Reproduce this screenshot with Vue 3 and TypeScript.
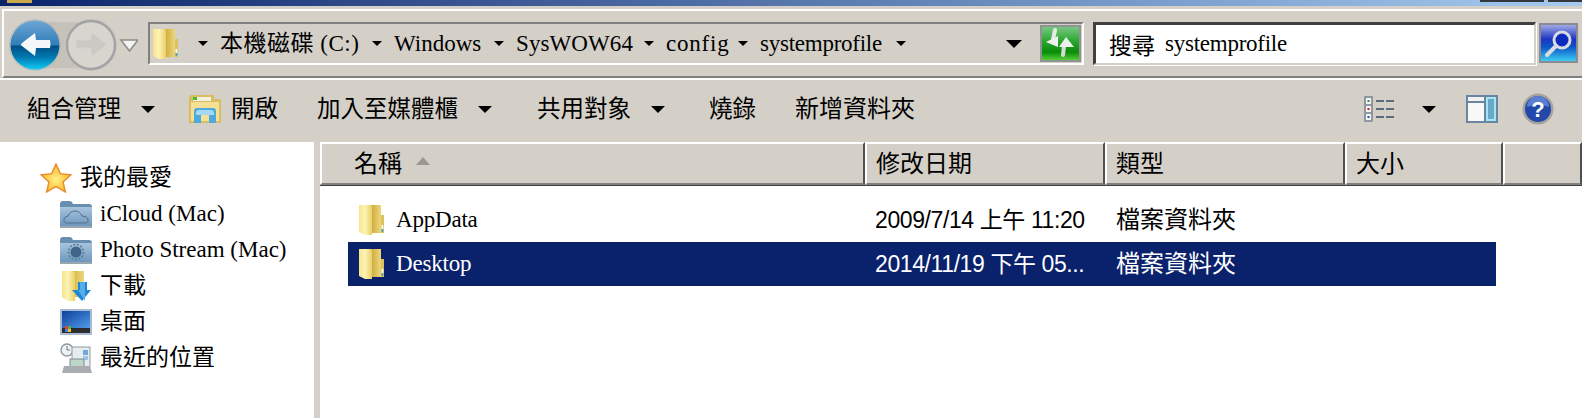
<script setup lang="ts">
interface Crumb { label: string; width: number; spacing: number }
interface FileRow { name: string; date: string; type: string; selected: boolean }

const crumbs: Crumb[] = [
  { label: '本機磁碟 (C:)', width: 174, spacing: 0.5 },
  { label: 'Windows', width: 122, spacing: 0 },
  { label: 'SysWOW64', width: 150, spacing: 0.1 },
  { label: 'config', width: 94, spacing: 0.8 },
  { label: 'systemprofile', width: 158, spacing: -0.25 },
]

const columns: string[] = ['名稱', '修改日期', '類型', '大小', '']

const files: FileRow[] = [
  { name: 'AppData', date: '2009/7/14 上午 11:20', type: '檔案資料夾', selected: false },
  { name: 'Desktop', date: '2014/11/19 下午 05...', type: '檔案資料夾', selected: true },
]
</script>

<template>
  <div class="window">
    <svg class="defs" aria-hidden="true">
      <defs>
        <linearGradient id="doorG" x1="0" y1="0" x2="1" y2="0">
          <stop offset="0" stop-color="#f5e48e" />
          <stop offset="0.45" stop-color="#fdf3b4" />
          <stop offset="1" stop-color="#e8cf68" />
        </linearGradient>
        <linearGradient id="backG" x1="0" y1="0" x2="1" y2="0">
          <stop offset="0" stop-color="#cfa93a" />
          <stop offset="1" stop-color="#ecd77c" />
        </linearGradient>
        <linearGradient id="blueBtn" x1="0" y1="0" x2="0" y2="1">
          <stop offset="0" stop-color="#6fa6d4" />
          <stop offset="0.5" stop-color="#2f7db9" />
          <stop offset="0.52" stop-color="#004f82" />
          <stop offset="0.75" stop-color="#0079b0" />
          <stop offset="1" stop-color="#12ccf5" />
        </linearGradient>
        <linearGradient id="greenBtn" x1="0" y1="0" x2="0" y2="1">
          <stop offset="0" stop-color="#7ec98a" />
          <stop offset="0.45" stop-color="#27a52b" />
          <stop offset="0.75" stop-color="#0a8c0a" />
          <stop offset="1" stop-color="#5ed83c" />
        </linearGradient>
        <linearGradient id="searchBtn" x1="0" y1="0" x2="0" y2="1">
          <stop offset="0" stop-color="#a9b0e6" />
          <stop offset="0.4" stop-color="#1c35c4" />
          <stop offset="0.6" stop-color="#0d55c8" />
          <stop offset="1" stop-color="#3fd4f5" />
        </linearGradient>
        <linearGradient id="slateG" x1="0" y1="0" x2="0" y2="1">
          <stop offset="0" stop-color="#a9c4dc" />
          <stop offset="1" stop-color="#6d97bd" />
        </linearGradient>
        <radialGradient id="starG" cx="0.5" cy="0.55" r="0.55">
          <stop offset="0" stop-color="#fff08a" />
          <stop offset="0.7" stop-color="#fdc640" />
          <stop offset="1" stop-color="#f59a22" />
        </radialGradient>
        <linearGradient id="deskG" x1="0" y1="0" x2="1" y2="1">
          <stop offset="0" stop-color="#0f3f9c" />
          <stop offset="1" stop-color="#4f9be6" />
        </linearGradient>
        <symbol id="folder" viewBox="0 0 26 32">
          <path d="M13 1h10v28H13z" fill="url(#backG)" />
          <path d="M23 11h3v18h-3z" fill="#dcc25e" />
          <rect x="23.6" y="21" width="1.6" height="4" fill="#fff" />
          <rect x="23.6" y="25" width="1.6" height="3" fill="#3ba3d8" />
          <path d="M1 1h12l1 2v28H7l-6-3z" fill="url(#doorG)" />
        </symbol>
        <symbol id="slateFolder" viewBox="0 0 32 29">
          <path d="M0 4q0-3 3-3h7q2 0 3 3h16q3 0 3 3v20H0z" fill="#688fb2" />
          <rect x="0" y="7" width="32" height="19" fill="url(#slateG)" />
          <rect x="0" y="26" width="32" height="2" fill="#9aa6b0" />
        </symbol>
      </defs>
    </svg>

    <div class="titlebar">
      <span class="title-icon"></span>
      <span class="title-btn title-btn-min"></span>
      <span class="title-btn title-btn-close"></span>
    </div>

    <div class="addressbar">
      <svg class="nav-buttons" width="130" height="52" viewBox="0 0 130 52">
        <rect x="24" y="3" width="60" height="46" fill="#bdb9b0" opacity="0.6" />
        <circle cx="27" cy="26" r="26" fill="#b4b4b4" opacity="0.55" />
        <circle cx="27" cy="26" r="24.5" fill="url(#blueBtn)" />
        <path d="M14 24 27 14l1 7h14q1 4 0 8H28l-1 8-13-10q-2-1 0-3z" fill="#f4f8fb" />
        <circle cx="83" cy="26" r="26" fill="#c8c6c0" />
        <circle cx="83" cy="26" r="24" fill="#d8d5ce" stroke="#a3a2a4" stroke-width="2.4" />
        <path d="M97 24 84 14l-1 7H69q-1 4 0 8h14l1 8 13-10q2-1 0-3z" fill="#cbc9c3" stroke="#d2d0ca" stroke-width="1" />
        <path d="M113 21h17l-8.5 11z" fill="#f4f3ef" stroke="#8d8d90" stroke-width="1.6" />
      </svg>

      <div class="address">
        <svg class="address-folder" width="26" height="32"><use href="#folder" /></svg>
        <div
          class="crumb"
          v-for="crumb in crumbs"
          :key="crumb.label"
          :style="{ width: crumb.width + 'px' }"
        >
          <span class="caret-sm"></span>
          <span class="crumb-text" :style="{ letterSpacing: crumb.spacing + 'px' }">{{ crumb.label }}</span>
        </div>
        <span class="caret-sm"></span>
        <span class="caret-lg caret-history"></span>
        <svg class="refresh" width="41" height="37" viewBox="0 0 41 37">
          <rect x="1" y="1" width="39" height="35" fill="url(#greenBtn)" stroke="#8e9491" stroke-width="2" />
          <path d="M15 5 13 15" stroke="#e4ebe4" stroke-width="4" stroke-linecap="round" />
          <path d="M6 17l12-6v11z" fill="#eef2ee" />
          <path d="M24 21 23 30" stroke="#d4dcd4" stroke-width="4" stroke-linecap="round" />
          <path d="M26 12l8 10H19z" fill="#eef2ee" />
        </svg>
      </div>

      <div class="search">
        <span class="search-cjk">搜尋</span>
        <span class="search-text">systemprofile</span>
      </div>

      <svg class="search-btn" width="39" height="40" viewBox="0 0 39 40">
        <rect x="1" y="1" width="37" height="38" fill="url(#searchBtn)" stroke="#8a8b93" stroke-width="2" />
        <circle cx="23" cy="17" r="8" fill="#0a2bbd" stroke="#d8dbe2" stroke-width="3" />
        <path d="M17 23 8 32" stroke="#d8dbe2" stroke-width="4" stroke-linecap="round" />
      </svg>
    </div>

    <div class="commandbar">
      <button class="cmd first">組合管理<span class="caret-lg cmd-caret"></span></button>
      <button class="cmd open">
        <svg width="32" height="28" viewBox="0 0 32 28">
          <path d="M0 3q0-3 3-3h22v4h7v24H0z" fill="#d9bd62" />
          <rect x="4" y="2" width="18" height="4" fill="#f4f1df" />
          <rect x="4" y="2" width="4" height="3" fill="#3cc22c" />
          <rect x="2" y="7" width="28" height="19" fill="#f4e196" />
          <path d="M5 28V16q0-3 3-3h16q3 0 3 3v12h-7v-7q0-2-2-2h-4q-2 0-2 2v7z" fill="#4ea9dc" />
          <path d="M7 18q0-3 3-3h12q3 0 3 3v2H7z" fill="#a6d8f2" />
        </svg>
        <span>開啟</span>
      </button>
      <button class="cmd library">加入至媒體櫃<span class="caret-lg cmd-caret"></span></button>
      <button class="cmd share">共用對象<span class="caret-lg cmd-caret"></span></button>
      <button class="cmd burn">燒錄</button>
      <button class="cmd newfolder">新增資料夾</button>

      <div class="cmd-right">
        <svg width="30" height="26" viewBox="0 0 30 26">
          <rect x="0" y="0" width="9" height="26" rx="1" fill="#8f979f" />
          <rect x="2" y="2" width="5" height="6" fill="#f4f4f0" />
          <rect x="2" y="10" width="5" height="6" fill="#f4f4f0" />
          <rect x="2" y="18" width="5" height="6" fill="#f4f4f0" />
          <rect x="3.5" y="4" width="2" height="2" fill="#2f8f4f" />
          <rect x="3.5" y="12" width="2" height="2" fill="#d01818" />
          <rect x="3.5" y="20" width="2" height="2" fill="#2050c0" />
          <g fill="#5c6a7c">
            <rect x="12" y="4" width="8" height="2" /><rect x="22" y="4" width="8" height="2" />
            <rect x="12" y="12" width="8" height="2" /><rect x="22" y="12" width="8" height="2" />
            <rect x="12" y="20" width="8" height="2" /><rect x="22" y="20" width="8" height="2" />
          </g>
        </svg>
        <span class="caret-lg view-caret"></span>
        <svg class="pane-icon" width="32" height="28" viewBox="0 0 32 28">
          <rect x="0" y="0" width="32" height="28" fill="#6a84a2" />
          <rect x="2" y="2" width="16" height="4" fill="#f2f2ee" />
          <rect x="2" y="8" width="16" height="18" fill="#f8f8f6" />
          <rect x="20" y="2" width="10" height="24" fill="#a2e6f4" />
          <rect x="22" y="4" width="6" height="20" fill="#6aa8c8" />
        </svg>
        <svg class="help-icon" width="32" height="32" viewBox="0 0 32 32">
          <circle cx="16" cy="16" r="15.5" fill="#a5a39e" />
          <circle cx="16" cy="16" r="13" fill="#2248ac" />
          <path d="M5 14a11 11 0 0 1 22 0q-11-5-22 0z" fill="#5a7fd0" />
          <text x="16" y="24" text-anchor="middle" class="help-q">?</text>
        </svg>
      </div>
    </div>

    <div class="body">
      <nav class="sidebar">
        <div class="fav">
          <svg width="32" height="30" viewBox="0 0 32 30">
            <path d="M16 1l4.4 9.6L31 11.8l-8 7.2L25.4 29 16 23.6 6.6 29 9 19l-8-7.2 10.6-1.2z" fill="url(#starG)" stroke="#ea8a30" stroke-width="1.4" />
          </svg>
          <span>我的最愛</span>
        </div>
        <div class="nav-item">
          <svg width="32" height="29"><use href="#slateFolder" /></svg>
          <svg class="overlay-glyph" width="32" height="29" viewBox="0 0 32 29">
            <path d="M6 24q-3-1-2-4t4-3q2-5 7-5t7 5q5 0 6 3t-2 4z" fill="none" stroke="#52708c" stroke-width="1" />
          </svg>
          <span class="latin">iCloud (Mac)</span>
        </div>
        <div class="nav-item">
          <svg width="32" height="29"><use href="#slateFolder" /></svg>
          <svg class="overlay-glyph" width="32" height="29" viewBox="0 0 32 29">
            <circle cx="16" cy="17" r="5.5" fill="#3f6488" />
            <circle cx="16" cy="17" r="7.5" fill="none" stroke="#52799c" stroke-width="1.5" stroke-dasharray="2 1.6" />
          </svg>
          <span class="latin">Photo Stream (Mac)</span>
        </div>
        <div class="nav-item">
          <svg width="32" height="32" viewBox="0 0 32 32">
            <path d="M8 1h16v26H8z" fill="url(#backG)" />
            <path d="M2 1h11l2 2v28H8l-6-4z" fill="url(#doorG)" />
            <path d="M20 12h9v8h4l-9 11-10-11h6z" transform="translate(-2 0)" fill="#1f86d8" />
            <path d="M20 12h5v19l-7-11h2z" fill="#55aee8" />
          </svg>
          <span>下載</span>
        </div>
        <div class="nav-item">
          <svg width="32" height="26" viewBox="0 0 32 26">
            <rect x="0" y="0" width="32" height="26" fill="#a9bbd2" />
            <rect x="2" y="2" width="28" height="17" fill="url(#deskG)" />
            <rect x="2" y="19" width="28" height="5" fill="#2d2d2d" />
            <rect x="5" y="17" width="3" height="3" fill="#e3432f" />
            <rect x="8" y="17" width="3" height="3" fill="#4fb04a" />
            <rect x="5" y="20" width="3" height="3" fill="#3c80e0" />
            <rect x="8" y="20" width="3" height="3" fill="#f2c230" />
          </svg>
          <span>桌面</span>
        </div>
        <div class="nav-item">
          <svg width="32" height="30" viewBox="0 0 32 30">
            <circle cx="7" cy="7" r="6" fill="#eef1f3" stroke="#8d9aa4" stroke-width="1.4" />
            <path d="M7 3v4h3" fill="none" stroke="#6c7a86" stroke-width="1" />
            <rect x="12" y="4" width="18" height="20" fill="#e6ebee" stroke="#909aa2" />
            <rect x="23" y="7" width="5" height="5" fill="#6ea9dc" />
            <rect x="23" y="13" width="5" height="4" fill="#9cc5e8" />
            <rect x="10" y="16" width="14" height="8" fill="#bcd6c8" stroke="#7f8b90" />
            <path d="M4 23h26l2 7H2z" fill="#a9adb1" />
          </svg>
          <span>最近的位置</span>
        </div>
      </nav>

      <main class="files">
        <div class="file-head">
          <div class="head-cell" v-for="(col, i) in columns" :key="i">
            <span>{{ col }}</span>
            <svg v-if="i === 0" class="sort" width="14" height="8" viewBox="0 0 14 8">
              <path d="M7 0l7 8H0z" fill="#9a9894" />
            </svg>
          </div>
        </div>
        <div class="file-list">
          <div class="file-row" :class="{ selected: file.selected }" v-for="file in files" :key="file.name">
            <div class="cell-name">
              <svg width="26" height="32"><use href="#folder" /></svg>
              <span class="latin name">{{ file.name }}</span>
            </div>
            <div class="cell-date">{{ file.date }}</div>
            <div class="cell-type">{{ file.type }}</div>
          </div>
        </div>
      </main>
    </div>
  </div>
</template>

<style scoped>
.window {
  position: relative;
  width: 1582px;
  height: 418px;
  overflow: hidden;
  background: #d4d0c8;
  color: #000;
  font-family: "Liberation Serif", "Noto Sans CJK TC", serif;
  font-size: 23px;
}
.defs { position: absolute; width: 0; height: 0; }

.titlebar {
  position: relative;
  height: 6px;
  background: linear-gradient(to right, #0a246a, #a6caf0);
}
.title-icon {
  position: absolute;
  left: 7px;
  top: 0;
  width: 25px;
  height: 3px;
  background: #c9a94a;
}
.title-btn {
  position: absolute;
  top: 0;
  height: 2px;
  background: #33383f;
}
.title-btn-min { left: 1480px; width: 64px; }
.title-btn-close { left: 1548px; width: 34px; }

.addressbar {
  box-sizing: border-box;
  display: flex;
  align-items: flex-start;
  height: 69px;
  margin: 3px 0 0 2px;
  padding: 11px 0 0 4px;
  border-top: 2px solid #fff;
  border-left: 2px solid #fff;
  border-bottom: 2px solid #808080;
}
.nav-buttons { margin-top: -3px; flex: none; }
.address {
  box-sizing: border-box;
  display: flex;
  align-items: center;
  width: 936px;
  height: 43px;
  margin-left: 10px;
  padding-left: 2px;
  border-top: 2px solid #808080;
  border-left: 2px solid #808080;
  border-bottom: 2px solid #fff;
  border-right: 2px solid #fff;
}
.address-folder { flex: none; margin-right: 20px; }
.crumb { display: flex; align-items: center; flex: none; white-space: nowrap; }
.crumb-text { margin-left: 12px; line-height: 30px; }
.caret-sm {
  flex: none;
  width: 0;
  height: 0;
  border-left: 5px solid transparent;
  border-right: 5px solid transparent;
  border-top: 5px solid #000;
}
.caret-lg {
  display: inline-block;
  flex: none;
  width: 0;
  height: 0;
  border-left: 7px solid transparent;
  border-right: 7px solid transparent;
  border-top: 7px solid #000;
}
.caret-history { margin-left: auto; margin-right: 18px; border-left-width: 8px; border-right-width: 8px; border-top-width: 8px; }
.refresh { flex: none; margin-right: 1px; }

.search {
  box-sizing: border-box;
  display: flex;
  align-items: center;
  width: 443px;
  height: 43px;
  margin-left: 9px;
  padding-left: 13px;
  background: #fff;
  border-top: 3px solid #404040;
  border-left: 3px solid #404040;
  border-right: 2px solid #d4d0c8;
  border-bottom: 2px solid #d4d0c8;
  box-shadow: 1px 1px 0 #fff;
}
.search-text { margin-left: 10px; letter-spacing: -0.25px; }
.search-btn { flex: none; margin: 1px 0 0 3px; }

.commandbar {
  box-sizing: border-box;
  display: flex;
  align-items: center;
  height: 64px;
  padding: 0 28px 4px 27px;
  border-top: 2px solid #fff;
}
.cmd {
  display: flex;
  align-items: center;
  margin: 0;
  padding: 0;
  border: 0;
  background: none;
  color: inherit;
  font: inherit;
  font-size: 23.5px;
  line-height: 30px;
}
.cmd-caret { margin-left: 20px; }
.open { margin-left: 34px; gap: 10px; }
.library { margin-left: 39px; }
.share { margin-left: 45px; }
.burn { margin-left: 44px; }
.newfolder { margin-left: 39px; font-size: 24px; }
.cmd-right { display: flex; align-items: center; margin-left: auto; }
.view-caret { margin-left: 28px; }
.pane-icon { margin-left: 30px; }
.help-icon { margin-left: 24px; }
.help-q {
  fill: #fff;
  font-family: "Liberation Sans", sans-serif;
  font-size: 22px;
  font-weight: 700;
}

.body { display: flex; height: 276px; }
.sidebar {
  box-sizing: border-box;
  flex: none;
  width: 320px;
  padding: 18px 0 0 40px;
  background: #fff;
  border-right: 6px solid #d4d0c8;
}
.fav, .nav-item {
  position: relative;
  display: flex;
  align-items: center;
  height: 36px;
  line-height: 30px;
}
.fav { gap: 8px; }
.nav-item { gap: 8px; padding-left: 20px; }
.overlay-glyph { position: absolute; left: 20px; top: 3px; }
.latin { letter-spacing: 0; }

.files { flex: 1; background: #fff; }
.file-head {
  display: grid;
  grid-template-columns: 545px 240px 240px 158px 1fr;
  height: 44px;
  background: #d4d0c8;
  border-bottom: 2px solid #404040;
  box-sizing: border-box;
}
.head-cell {
  box-sizing: border-box;
  display: flex;
  align-items: center;
  padding: 0 0 4px 9px;
  font-size: 24px;
  border-top: 2px solid #fff;
  border-left: 2px solid #fff;
  border-right: 2px solid #505050;
  border-bottom: 2px solid #808080;
}
.head-cell:first-child { padding-left: 32px; }
.sort { margin: -2px 0 0 14px; }

.file-list { padding: 12px 0 0 28px; }
.file-row {
  display: grid;
  grid-template-columns: 517px 240px 1fr;
  width: 1148px;
  height: 44px;
  align-items: center;
  font-size: 24px;
}
.file-row.selected { background: #0a216b; color: #fff; }
.cell-name { display: flex; align-items: center; gap: 12px; padding-left: 10px; }
.cell-name svg { flex: none; }
.name { font-size: 23px; letter-spacing: -0.2px; }
.cell-date {
  padding: 0 0 5px 10px;
  font-family: "Liberation Sans", "Noto Sans CJK TC", sans-serif;
  font-size: 23px;
  letter-spacing: -0.4px;
  white-space: nowrap;
}
.cell-type { padding: 0 0 5px 11px; white-space: nowrap; }
</style>
